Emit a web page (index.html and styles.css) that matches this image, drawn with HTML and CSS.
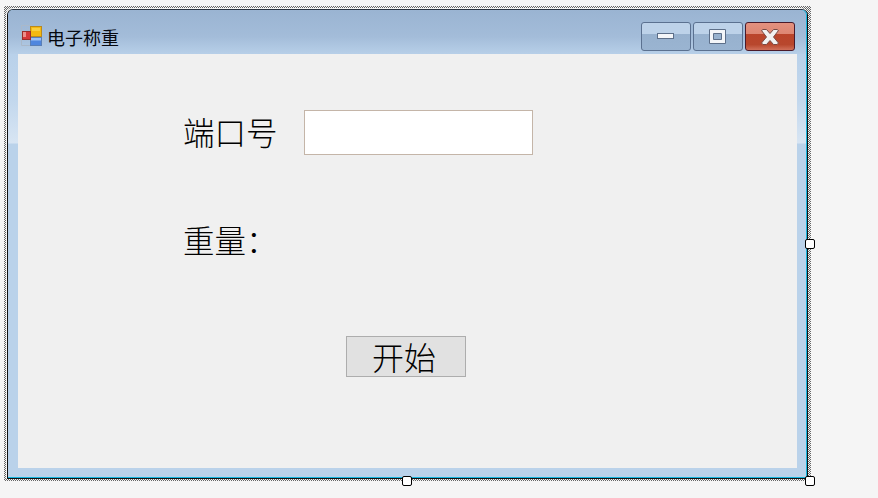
FILE: index.html
```html
<!DOCTYPE html>
<html lang="zh-CN">
<head>
  <meta charset="UTF-8" />
  <title>电子称重</title>
  <link rel="stylesheet" href="styles.css">
</head>
<body>

  <div class="selection">
    <div class="window">
      <div class="titlebar">
        <svg class="app-icon" width="22" height="22" viewBox="0 0 22 22">
          <path d="M10 0.5H0.5V20.5H10" fill="none" stroke="#aab8c9"/>
          <rect x="9.5" y="1.5" width="11" height="10" fill="#f5b90f" stroke="#b98a1c"/>
          <rect x="11" y="3" width="8" height="3" fill="#f9cf3f"/>
          <rect x="9.5" y="12.5" width="11" height="8" fill="#4f86de" stroke="#5a7fb5"/>
          <rect x="10" y="13" width="10" height="2.5" fill="#9cc0f2"/>
          <rect x="1.5" y="6.5" width="8" height="8" fill="#d6373a" stroke="#9a2d2a"/>
          <rect x="2" y="7" width="3" height="5" fill="#ec8f8c"/>
        </svg>
        <span class="title-text">电子称重</span>
        <div class="caption-btns">
          <div class="caption-btn">
            <svg width="18" height="7" viewBox="0 0 18 7">
              <rect x="0.5" y="0.5" width="16" height="5" fill="#f4f6f9" stroke="#5d6f89"/>
            </svg>
          </div>
          <div class="caption-btn">
            <svg width="18" height="16" viewBox="0 0 18 16">
              <path fill-rule="evenodd" d="M0.5 0.5H16.5V14.5H0.5ZM4.5 4.5V10.5H12.5V4.5Z" fill="#f4f6f9" stroke="#5d6f89"/>
            </svg>
          </div>
          <div class="caption-btn close">
            <svg width="18" height="16" viewBox="0 0 18 16">
              <path d="M0.5 1.5L2 0.5H5.5L9 4.5L12.5 0.5H16L17.5 1.5L12.5 8L17.5 14L16 15.5H12.5L9 11.5L5.5 15.5H2L0.5 14L5.5 8Z" fill="#f1f1f1" stroke="#7a4a44"/>
            </svg>
          </div>
        </div>
      </div>

      <div class="frame-mid">
        <div class="side"></div>
        <div class="client">
          <div class="row port-row">
            <label class="big-label">端口号</label>
            <input class="port-input" type="text">
          </div>
          <div class="row weight-row">
            <span class="big-label">重量：</span>
          </div>
          <button class="start-btn">开始</button>
        </div>
        <div class="side"></div>
      </div>
      <div class="frame-bottom"></div>
    </div>

    <span class="handle handle-e"></span>
    <span class="handle handle-s"></span>
    <span class="handle handle-se"></span>
  </div>

</body>
</html>
```

FILE: styles.css
```css
body {
  box-sizing: border-box;
  min-height: 100vh;
  margin: 0;
  padding: 6px 0 0 4px;
  background: #f5f5f5;
  font-family: "Noto Sans CJK SC", sans-serif;
  color: #000;
}

/* dotted designer frame */
.selection {
  position: relative;
  box-sizing: border-box;
  width: 807px;
  height: 475px;
  padding: 3px 3px 2px 3px;
  background-image: conic-gradient(#666 25%, #f5f5f5 0 50%, #666 0 75%, #f5f5f5 0);
  background-size: 2px 2px;
}

.window {
  box-sizing: border-box;
  height: 100%;
  display: flex;
  flex-direction: column;
  border: 1px solid #111;
  border-top-color: #2b3440;
  border-radius: 6px 6px 0 0;
  background: #bad2ea;
  box-shadow: inset -1px -1px 0 #14b4dc, -1px -1px 0 #f5f5f5;
}

.titlebar {
  height: 44px;
  flex: none;
  display: flex;
  align-items: center;
  padding: 0 12px 0 13px;
  border-radius: 5px 5px 0 0;
  background: linear-gradient(#9ab4d2, #a3bcd9 60%, #b7cfe8);
  box-shadow: inset -1px 0 0 #14b4dc;
}

.app-icon {
  margin-top: 7px;
  flex: none;
}

.title-text {
  margin-left: 4px;
  margin-top: 9px;
  font-size: 18px;
  line-height: 24px;
  color: #05080f;
}

.caption-btns {
  margin-left: auto;
  margin-top: 9px;
  display: flex;
  gap: 2px;
}

.caption-btn {
  box-sizing: border-box;
  width: 50px;
  height: 29px;
  display: flex;
  align-items: center;
  justify-content: center;
  border: 1px solid #5b7190;
  border-radius: 3px;
  background: linear-gradient(#bdd2e9 0, #bdd2e9 11px, #97b1ce 11px, #9ab4d1 100%);
}

.caption-btn.close {
  border-color: #4a1a2a;
  background: linear-gradient(#e4917f 0, #dd8672 11px, #ba442a 11px, #b8472d 80%, #d0705a 100%);
}

.frame-mid {
  flex: 1;
  display: flex;
  min-height: 0;
}

.side {
  width: 10px;
  flex: none;
  background: linear-gradient(#b9d1ea 0, #c2d7ed 45px, #d8e5f3 89px, #bad2ea 90px);
}

.side:last-child {
  box-shadow: inset -1px 0 0 #14b4dc;
}

.client {
  flex: 1;
  box-sizing: border-box;
  padding: 56px 0 0 166px;
  background: #f0f0f0;
}

.frame-bottom {
  height: 10px;
  flex: none;
}

.row {
  display: flex;
  align-items: center;
}

.port-row {
  height: 45px;
}

.big-label {
  margin-left: -1px;
  padding-bottom: 2px;
  font-size: 31.5px;
  line-height: 45px;
  font-weight: 300;
  color: #000;
}

.port-input {
  box-sizing: border-box;
  width: 229px;
  height: 45px;
  margin-left: auto;
  margin-right: 264px;
  border: 1px solid #c4b5a8;
  background: #fff;
  padding: 0;
  outline: none;
}

.weight-row {
  height: 45px;
  margin-top: 63px;
}

.start-btn {
  display: block;
  box-sizing: border-box;
  width: 120px;
  height: 41px;
  margin: 73px 0 0 162px;
  padding: 0 4px 0 0;
  border: 1px solid #adadad;
  background: #e1e1e1;
  font-family: inherit;
  font-size: 32px;
  font-weight: 300;
  line-height: 37px;
  color: #000;
}

/* resize handles on the designer frame */
.handle {
  position: absolute;
  box-sizing: border-box;
  width: 10px;
  height: 10px;
  background: #fff;
  border: 1px solid #000;
  border-radius: 2px;
}

.handle-e {
  left: 801px;
  top: 233px;
}

.handle-s {
  left: 398px;
  top: 470px;
}

.handle-se {
  left: 801px;
  top: 470px;
}
```
